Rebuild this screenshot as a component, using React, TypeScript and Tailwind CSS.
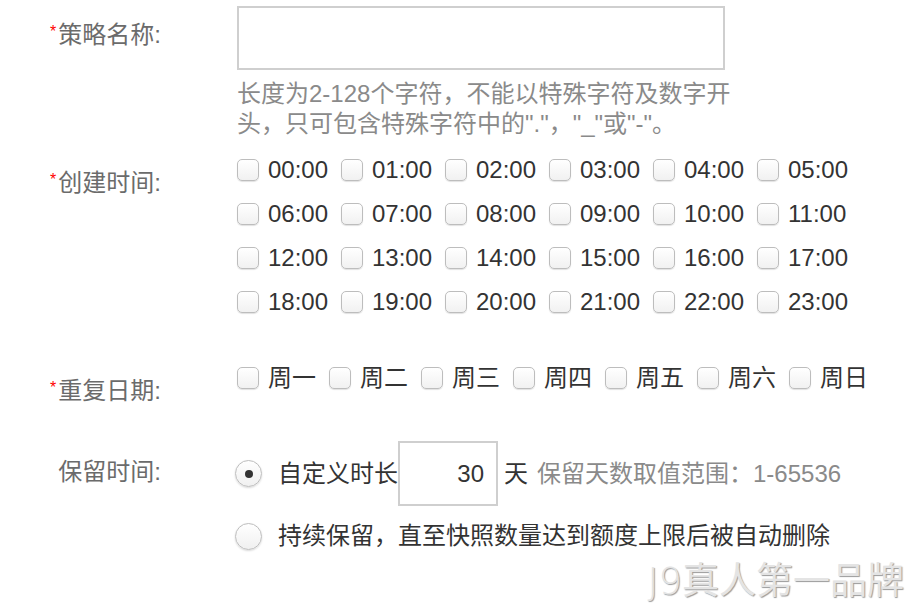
const hours = Array.from({ length: 24 }, (_, i) => `${String(i).padStart(2, "0")}:00`);
const days = ["周一", "周二", "周三", "周四", "周五", "周六", "周日"];

function Box() {
  return (
    <span className="inline-block size-[22px] shrink-0 rounded-[5px] border border-[#bdbdbd] bg-gradient-to-b from-white to-[#f1f1f1] shadow-[0_1px_1px_rgba(0,0,0,0.12)]" />
  );
}

function Radio({ checked }: { checked?: boolean }) {
  return (
    <span className="flex size-[27px] shrink-0 items-center justify-center rounded-full border border-[#bdbdbd] bg-gradient-to-b from-white to-[#f0f0f0] shadow-[0_1px_2px_rgba(0,0,0,0.15)]">
      {checked && <span className="size-[8px] rounded-full bg-[#333]" />}
    </span>
  );
}

function Label({ text, required, pt }: { text: string; required?: boolean; pt: string }) {
  return (
    <div className={`h-0 w-[237px] shrink-0 whitespace-nowrap pr-[76px] text-right leading-[30px] text-[#6b6b6b] ${pt}`}>
      {required && <span className="mr-[2px] align-[6px] text-[16px] text-[#ff0000]">*</span>}
      {text}
    </div>
  );
}

export default function App() {
  return (
    <div className="relative h-[612px] w-[920px] overflow-hidden bg-white pt-[6px] font-['Liberation_Sans','Noto_Sans_CJK_SC',sans-serif] text-[24px]">
      {/* 策略名称 */}
      <div className="flex">
        <Label text="策略名称:" required pt="pt-[11px]" />
        <div>
          <div className="h-[64px] w-[488px] border-2 border-[#cfcfcf] bg-white" />
          <p className="mt-[9px] whitespace-nowrap leading-[30px] text-[#8a8a8a]">
            长度为2-128个字符，不能以特殊字符及数字开
            <br />
            头，只可包含特殊字符中的"."，"_"或"-"。
          </p>
        </div>
      </div>

      {/* 创建时间 */}
      <div className="mt-[9px] flex">
        <Label text="创建时间:" required pt="pt-[17px]" />
        <div className="grid grid-cols-[repeat(6,104px)]">
          {hours.map((h) => (
            <label key={h} className="flex h-[44px] items-center gap-[9px] text-[#333]">
              <Box />
              {h}
            </label>
          ))}
        </div>
      </div>

      {/* 重复日期 */}
      <div className="mt-[32px] flex">
        <Label text="重复日期:" required pt="pt-[17px]" />
        <div className="grid grid-cols-[repeat(7,92px)]">
          {days.map((d) => (
            <label key={d} className="flex h-[44px] items-center gap-[9px] text-[#333]">
              <Box />
              {d}
            </label>
          ))}
        </div>
      </div>

      {/* 保留时间 */}
      <div className="mt-[41px] flex">
        <Label text="保留时间:" pt="pt-[16px]" />
        <div className="-ml-[2px]">
          <div className="flex h-[65px] items-center text-[#333]">
            <Radio checked />
            <span className="ml-[16px]">自定义时长</span>
            <div className="flex h-[65px] w-[100px] items-center justify-end border-2 border-[#cfcfcf] pr-[12px]">
              30
            </div>
            <span className="ml-[6px]">天</span>
            <span className="ml-[9px] text-[#8a8a8a]">保留天数取值范围：1-65536</span>
          </div>
          <div className="mt-[15px] flex h-[30px] items-center text-[#333]">
            <Radio />
            <span className="ml-[16px]">持续保留，直至快照数量达到额度上限后被自动删除</span>
          </div>
        </div>
      </div>

      <div className="absolute bottom-[8px] right-[16px] whitespace-nowrap text-[37px] leading-[44px] text-[#e4e4e4] [text-shadow:1px_1px_1px_#9a9a9a]">
        <span className="font-['Comic_Sans_MS','DejaVu_Sans',sans-serif] font-light">J9</span>
        真人第一品牌
      </div>
    </div>
  );
}
